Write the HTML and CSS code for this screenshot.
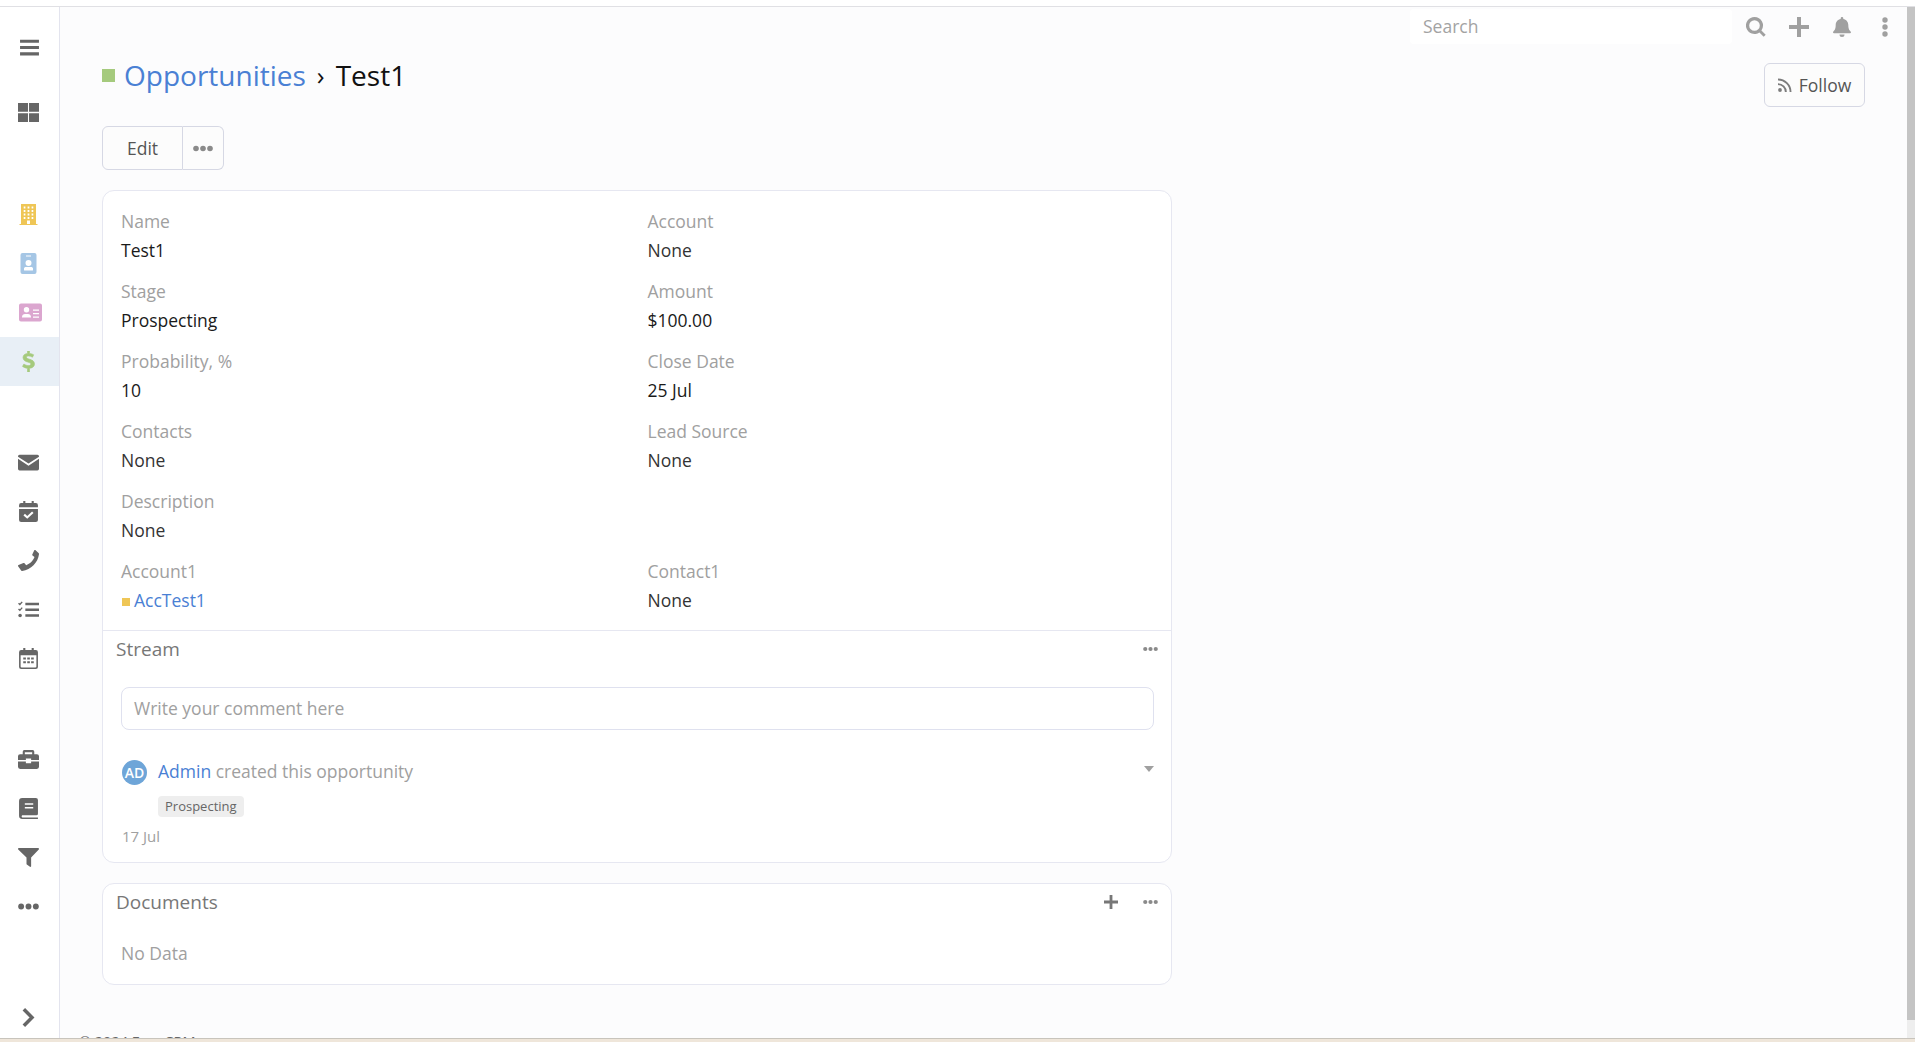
FILE: index.html
```html
<!DOCTYPE html>
<html lang="en">
<head>
<meta charset="utf-8">
<title>Test1</title>
<link rel="stylesheet" href="styles.css">
</head>
<body>
<div class="topline"></div>
<div class="shell">
  <nav class="sidebar">
    <div class="nav-item nav-first"><svg class="ic" viewBox="0 0 20 20"><path d="M1 2.500h18v3H1zM1 8.500h18v3H1zM1 14.500h18v3H1z"/></svg></div>
    <div class="nav-item nav-dash"><svg class="ic" viewBox="0 0 20 18"><path d="M0 0h9.500v8.400H0zM10.500 0H20v8.400h-9.500zM0 9.600h9.500V18H0zM10.500 9.600H20V18h-9.500z"/></svg></div>
    <div class="nav-group">
      <div class="nav-item c-yellow"><svg class="ic" viewBox="0 0 18 21"><path fill-rule="evenodd" d="M1.500 0h15v20H18v1H0v-1h1.500zM4.200 2.500v2h1.700v-2zm3.900 0v2h1.800v-2zm4 0v2h1.700v-2zM4.200 6v2h1.700V6zm3.900 0v2h1.800V6zm4 0v2h1.700V6zM4.200 9.500v2h1.700v-2zm3.900 0v2h1.800v-2zm4 0v2h1.700v-2zM4.200 13v2h1.700v-2zm3.900 0v2h1.800v-2zm4 0v2h1.700v-2zM7.500 16.500V20h3v-3.500z"/></svg></div>
      <div class="nav-item c-blue"><svg class="ic" viewBox="0 0 16 21"><path fill-rule="evenodd" d="M2 0h12a2 2 0 0 1 2 2v17a2 2 0 0 1-2 2H2a2 2 0 0 1-2-2V2a2 2 0 0 1 2-2zm3.500 2.500v1h5v-1zM8 7a3 3 0 1 0 0 6 3 3 0 0 0 0-6zm-4.500 8.500V17a.5.500 0 0 0 .5.500h8a.5.500 0 0 0 .5-.500v-1.500c0-1-1-1.500-2-1.500H5.500c-1 0-2 .500-2 1.500z"/></svg></div>
      <div class="nav-item c-pink"><svg class="ic" viewBox="0 0 23 18"><path fill-rule="evenodd" d="M2 0h19a2 2 0 0 1 2 2v14a2 2 0 0 1-2 2H2a2 2 0 0 1-2-2V2a2 2 0 0 1 2-2zm5.500 3.500a2.700 2.700 0 1 0 0 5.400 2.700 2.700 0 0 0 0-5.400zM3 13.500v.5h9v-.5c0-2-1.500-3-3-3H6c-1.500 0-3 1-3 3zM14 6v1.200h6V6zm0 3.500v1.200h6V9.500zm0 3.500v1.200h6V13z"/></svg></div>
      <div class="nav-item nav-active c-green"><svg class="ic" viewBox="0 0 12 21"><path d="M5 0h2v2.400c1.500.1 3 .6 4.200 1.400L10 6.200C8.700 5.400 7.400 5 6 5c-1.300 0-2 .5-2 1.300 0 .9 1 1.300 3 1.900 2.700.8 5 1.900 5 4.700 0 2.400-1.800 4-5 4.400V21H5v-3.700c-1.800-.2-3.500-.8-5-1.900l1.400-2.400C2.800 14 4.400 14.600 6 14.600c1.500 0 2.300-.6 2.300-1.500 0-1-1.100-1.400-3-2C2.700 10.300.5 9.200.5 6.500c0-2.300 1.700-3.800 4.500-4.100z"/></svg></div>
    </div>
    <div class="nav-group nav-group-mid">
      <div class="nav-item"><svg class="ic" viewBox="0 0 20 15"><path d="M1.500 0h17A1.500 1.500 0 0 1 20 1.500v.5l-10 6.500L0 2v-.5A1.500 1.500 0 0 1 1.500 0zM0 4l10 6.500L20 4v9.500a1.500 1.500 0 0 1-1.500 1.500h-17A1.500 1.500 0 0 1 0 13.500z"/></svg></div>
      <div class="nav-item"><svg class="ic" viewBox="0 0 18 20"><path fill-rule="evenodd" d="M4 0h2v2h6V0h2v2h2a2 2 0 0 1 2 2v2H0V4a2 2 0 0 1 2-2h2zM0 7.500h18V18a2 2 0 0 1-2 2H2a2 2 0 0 1-2-2zM7.800 17l6-5.500-1.400-1.500-4.600 4.200-2.200-2-1.400 1.500z"/></svg></div>
      <div class="nav-item"><svg class="ic" viewBox="0 0 20 20"><path d="M19.800 3.200 16.500.1c-.4-.2-.9-.1-1.100.3l-1.800 3.800c-.2.300-.1.700.2 1l1.900 1.500c-1.100 3.300-4.400 6.500-7.900 7.800l-1.600-1.900c-.3-.3-.6-.4-1-.2L.5 14.300c-.4.200-.6.700-.4 1.100l2.900 4.200c.2.300.6.500 1 .4C12.500 18.800 19 12 20 4.100c0-.3 0-.7-.2-.9z"/></svg></div>
      <div class="nav-item"><svg class="ic" viewBox="0 0 20 16"><path d="M7 1.500h13v2.500H7zM7 7h13v2.500H7zM7 12.500h13V15H7z"/><path class="ic-thin" d="M.5 2l1.300 1.300L4 .7M.5 7.500l1.300 1.300L4 6.200"/><circle cx="2" cy="13.700" r="1.700"/></svg></div>
      <div class="nav-item"><svg class="ic" viewBox="0 0 18 20"><path fill-rule="evenodd" d="M4 0h2v2h6V0h2v2h2a2 2 0 0 1 2 2v14a2 2 0 0 1-2 2H2a2 2 0 0 1-2-2V4a2 2 0 0 1 2-2h2zM1.500 7v10.500a1 1 0 0 0 1 1h13a1 1 0 0 0 1-1V7zM4 9h2.500v2H4zm3.800 0h2.500v2H7.800zm3.700 0H14v2h-2.500zM4 12.500h2.500v2H4zm3.800 0h2.500v2H7.800zm3.700 0H14v2h-2.500z"/></svg></div>
    </div>
    <div class="nav-group nav-group-low">
      <div class="nav-item"><svg class="ic" viewBox="0 0 20 18"><path fill-rule="evenodd" d="M6 0h8a1.500 1.500 0 0 1 1.500 1.500V4H18a2 2 0 0 1 2 2v3.500h-7.500V8h-5v1.500H0V6a2 2 0 0 1 2-2h2.500V1.500A1.500 1.500 0 0 1 6 0zm.5 2v2h7V2zM0 11h7.500v1.500h5V11H20v5a2 2 0 0 1-2 2H2a2 2 0 0 1-2-2z"/></svg></div>
      <div class="nav-item"><svg class="ic" viewBox="0 0 18 20"><path fill-rule="evenodd" d="M3 0h13a2 2 0 0 1 2 2v13a1.500 1.500 0 0 1-1.500 1.500H3a1.250 1.250 0 0 0 0 2h15V20H3a3 3 0 0 1-3-3V3a3 3 0 0 1 3-3zm2.500 5v1.500h8V5zm0 3.500V10h8V8.500z"/></svg></div>
      <div class="nav-item"><svg class="ic" viewBox="0 0 20 18"><path d="M.8 0h18.400c.7 0 1.100.8.600 1.300L12.500 9v8.300c0 .6-.6.900-1.100.6l-3-2.200a.7.700 0 0 1-.3-.6V9L.2 1.300C-.3.800.1 0 .8 0z"/></svg></div>
      <div class="nav-item"><svg class="ic" viewBox="0 0 20 6"><circle cx="3" cy="3" r="2.800"/><circle cx="10" cy="3" r="2.800"/><circle cx="17" cy="3" r="2.800"/></svg></div>
    </div>
    <div class="nav-item nav-bottom"><svg class="ic ic-chev" viewBox="0 0 12 18"><path d="M2 2l7 7-7 7"/></svg></div>
  </nav>

  <main class="main">
    <header class="topbar">
      <div class="search">Search</div>
      <svg class="tb-ic tb-search" viewBox="0 0 20 20"><path d="M8.500 0a8.500 8.500 0 0 1 6.900 13.400l4.300 4.300-2 2-4.300-4.300A8.500 8.500 0 1 1 8.500 0zm0 3.200a5.300 5.300 0 1 0 0 10.600 5.300 5.300 0 0 0 0-10.600z"/></svg>
      <svg class="tb-ic" viewBox="0 0 18 18"><path d="M7.200 0h3.600v7.200H18v3.600h-7.200V18H7.200v-7.200H0V7.200h7.200z"/></svg>
      <svg class="tb-ic" viewBox="0 0 18 20"><path d="M9 0c.8 0 1.300.6 1.300 1.300v.8c2.900.5 5 3 5 6 0 4.500 1.500 5.600 2.500 6.700.3.300.3 1.500-.8 1.500H1c-1.100 0-1.100-1.200-.8-1.500 1-1.100 2.500-2.200 2.500-6.700 0-3 2.100-5.500 5-6v-.8C7.700.6 8.200 0 9 0zM6.500 17.500h5A2.500 2.500 0 0 1 9 20a2.500 2.500 0 0 1-2.500-2.500z"/></svg>
      <svg class="tb-ic tb-last" viewBox="0 0 6 20"><circle cx="3" cy="3" r="2.700"/><circle cx="3" cy="10" r="2.700"/><circle cx="3" cy="17" r="2.700"/></svg>
    </header>

    <div class="page-head">
      <h1 class="title"><span class="dot-green"></span><a class="link">Opportunities</a><span class="sep">›</span><span>Test1</span></h1>
      <button class="btn btn-follow"><svg class="rss" viewBox="0 0 14 14"><circle cx="2" cy="12" r="1.900"/><path d="M0 5.200A8.800 8.800 0 0 1 8.800 14H6.900A6.900 6.900 0 0 0 0 7.100z"/><path d="M0 .5A13.500 13.500 0 0 1 13.500 14h-1.900A11.600 11.600 0 0 0 0 2.400z"/></svg>Follow</button>
    </div>

    <div class="btn-group">
      <button class="btn btn-edit">Edit</button>
      <button class="btn btn-more"><svg class="dots dots-btn" viewBox="0 0 20 6"><circle cx="3" cy="3" r="2.800"/><circle cx="10" cy="3" r="2.800"/><circle cx="17" cy="3" r="2.800"/></svg></button>
    </div>

    <section class="card">
      <div class="fields">
        <div class="field"><div class="label">Name</div><div class="value">Test1</div></div>
        <div class="field"><div class="label">Account</div><div class="value muted">None</div></div>
        <div class="field"><div class="label">Stage</div><div class="value">Prospecting</div></div>
        <div class="field"><div class="label">Amount</div><div class="value">$100.00</div></div>
        <div class="field"><div class="label">Probability, %</div><div class="value">10</div></div>
        <div class="field"><div class="label">Close Date</div><div class="value">25 Jul</div></div>
        <div class="field"><div class="label">Contacts</div><div class="value muted">None</div></div>
        <div class="field"><div class="label">Lead Source</div><div class="value muted">None</div></div>
        <div class="field field-wide"><div class="label">Description</div><div class="value muted">None</div></div>
        <div class="field"><div class="label">Account1</div><div class="value"><span class="dot-yellow"></span><a class="link">AccTest1</a></div></div>
        <div class="field"><div class="label">Contact1</div><div class="value muted">None</div></div>
      </div>

      <div class="panel-head stream-head">
        <h2 class="panel-title">Stream</h2>
        <svg class="dots" viewBox="0 0 20 6"><circle cx="3" cy="3" r="2.800"/><circle cx="10" cy="3" r="2.800"/><circle cx="17" cy="3" r="2.800"/></svg>
      </div>
      <div class="stream">
        <div class="comment">Write your comment here</div>
        <div class="note">
          <span class="avatar">AD</span>
          <div class="note-text"><a class="link">Admin</a> created this opportunity</div>
          <span class="caret"></span>
        </div>
        <div class="tag-row"><span class="tag">Prospecting</span></div>
        <div class="date">17 Jul</div>
      </div>
    </section>

    <section class="card card-docs">
      <div class="panel-head">
        <h2 class="panel-title">Documents</h2>
        <svg class="plus" viewBox="0 0 18 18"><path d="M7.200 0h3.600v7.200H18v3.600h-7.200V18H7.200v-7.200H0V7.200h7.200z"/></svg>
        <svg class="dots" viewBox="0 0 20 6"><circle cx="3" cy="3" r="2.800"/><circle cx="10" cy="3" r="2.800"/><circle cx="17" cy="3" r="2.800"/></svg>
      </div>
      <div class="no-data">No Data</div>
    </section>

    <footer class="footer">© 2024 EspoCRM</footer>
  </main>

  <div class="scrollbar"><div class="thumb"></div></div>
</div>
<div class="taskbar"></div>
</body>
</html>
```

FILE: styles.css
```css
* { box-sizing: border-box; }
html, body { margin: 0; height: 100%; overflow: hidden; }
body {
  display: flex;
  flex-direction: column;
  background: #fcfcfd;
  font-family: "Open Sans", sans-serif;
  font-size: 17.5px;
  color: #1d1d1d;
}
.topline { height: 7px; flex: none; background: #fff; border-bottom: 1px solid #e0e0e4; }
.shell { flex: 1; display: flex; min-height: 0; }
.taskbar { height: 4px; flex: none; background: #efe6da; border-top: 1px solid #c8c4bc; }

.sidebar {
  width: 60px; flex: none;
  display: flex; flex-direction: column;
  background: #fff;
  border-right: 1px solid #e3e4ee;
  padding-top: 16px;
}
.nav-item { height: 49px; flex: none; display: flex; align-items: center; justify-content: center; padding-right: 2px; }
.nav-first { padding-right: 0; }
.nav-dash { margin-top: 16px; }
.nav-group { margin-top: 53px; }
.nav-group-mid { margin-top: 52px; }
.nav-group-low { margin-top: 52px; }
.nav-active { background: #e8eff6; }
.nav-bottom { margin-top: auto; margin-bottom: -1px; height: 44px; }
.ic { width: 21px; height: 21px; fill: #666; }
.ic-thin { fill: none; stroke: #666; stroke-width: 1.3; }
.ic-chev { fill: none; stroke: #666; stroke-width: 3; }
.c-yellow .ic { fill: #efc656; }
.c-blue .ic { fill: #a5c6e5; }
.c-pink { padding: 0 0 0 1px; }
.c-pink .ic { fill: #dba6cf; width: 23px; height: 23px; }
.c-green .ic { fill: #a5ca7d; stroke: #a5ca7d; stroke-width: 0.6; }

.main { flex: 1; min-width: 0; padding: 0 42px 0 42px; position: relative; overflow: hidden; }
.topbar { display: flex; align-items: center; justify-content: flex-end; height: 37px; padding-top: 2px; margin-right: -37px; }
.search {
  width: 322px; height: 35px; background: #fff; border-radius: 4px;
  padding: 0 13px; line-height: 35px; color: #a3a3a3;
}
.tb-ic { width: 20px; height: 20px; fill: #a0a0a0; margin-left: 23px; }
.tb-search { margin-left: 14px; }
.tb-last { margin-right: 7px; }

.page-head { display: flex; justify-content: space-between; align-items: flex-start; margin-top: 12px; }
.title { margin: 0; font-size: 28px; font-weight: 400; line-height: 38px; display: flex; align-items: center; color: #111; }
.dot-green { width: 13px; height: 13px; background: #a5ca7d; margin-right: 9px; }
.sep { margin: 0 11px; font-size: 26px; }
.link { color: #4a80d4; text-decoration: none; }

.btn {
  font-family: inherit; font-size: 17.5px; color: #555;
  border: 1px solid #d6d8e4; height: 44px; padding: 0; background: #fcfcfc;
  display: inline-flex; align-items: center; justify-content: center;
}
.btn-follow { width: 101px; border-radius: 6px; margin-top: 7px; }
.rss { width: 14px; height: 14px; fill: #7c7c7c; margin-right: 7px; }
.btn-group { display: flex; margin-top: 19px; }
.btn-edit { width: 81px; border-radius: 6px 0 0 6px; }
.btn-more { width: 41px; border-left: 0; border-radius: 0 6px 6px 0; }
.dots { width: 15px; height: 6px; fill: #8a8a8a; flex: none; }
.dots-btn { width: 20px; height: 7px; }

.card {
  width: 1070px; background: #fff; border: 1px solid #e6e7f1; border-radius: 12px;
  margin-top: 20px;
}
.fields { display: grid; grid-template-columns: 526.5px 1fr; padding: 12px 18px 0; }
.field { height: 70px; padding-top: 4px; }
.field-wide { grid-column: 1 / -1; }
.label { color: #a0a0a0; line-height: 29px; }
.value { line-height: 29px; color: #1a1a1a; }
.muted { color: #333; }
.dot-yellow { display: inline-block; width: 8px; height: 8px; background: #efc656; margin: 0 4px 0 1px; vertical-align: 1px; }

.panel-head { display: flex; align-items: center; height: 38px; padding: 0 13px; }
.stream-head { border-top: 1px solid #e6e7f1; margin-top: 7px; padding-bottom: 2px; }
.panel-title { flex: 1; margin: 0; font-size: 19px; font-weight: 400; color: #777; line-height: 30px; }
.plus { width: 14px; height: 14px; fill: #777; margin-right: 25px; }

.stream { padding: 19px 17px 0 18px; }
.comment {
  height: 43px; border: 1px solid #dfe1ef; border-radius: 8px;
  padding: 0 12px; line-height: 41px; color: #a0a0a0;
}
.note { display: flex; align-items: center; margin-top: 23px; height: 36px; padding-left: 1px; }
.avatar {
  width: 25px; height: 25px; border-radius: 50%; background: #6ea5d8; color: #fff;
  font-size: 14px; font-weight: 600; line-height: 25px; text-align: center; margin-right: 11px; flex: none;
  margin-top: 2px;
}
.note-text { flex: 1; color: #a0a0a0; }
.caret { width: 0; height: 0; border-left: 5px solid transparent; border-right: 5px solid transparent; border-top: 6px solid #a0a0a0; margin-top: -4px; }
.tag-row { padding-left: 37px; margin-top: 3px; height: 25px; }
.tag { display: inline-block; background: #eee; border-radius: 4px; font-size: 13px; color: #666; height: 21px; line-height: 21px; padding: 0 7px; }
.date { color: #a0a0a0; font-size: 15px; margin-top: 6px; padding-left: 1px; height: 39px; line-height: 26px; }

.card-docs { margin-top: 20px; height: 102px; }
.card-docs .panel-head { height: 35px; }
.no-data { padding: 21px 18px 0; color: #a0a0a0; line-height: 26px; }

.footer { margin-top: 47px; font-size: 14.5px; color: #666; margin-left: -23px; }

.scrollbar { width: 8px; flex: none; background: #eeeeee; }
.thumb { height: 1013px; background: #c4c4c4; }
```
